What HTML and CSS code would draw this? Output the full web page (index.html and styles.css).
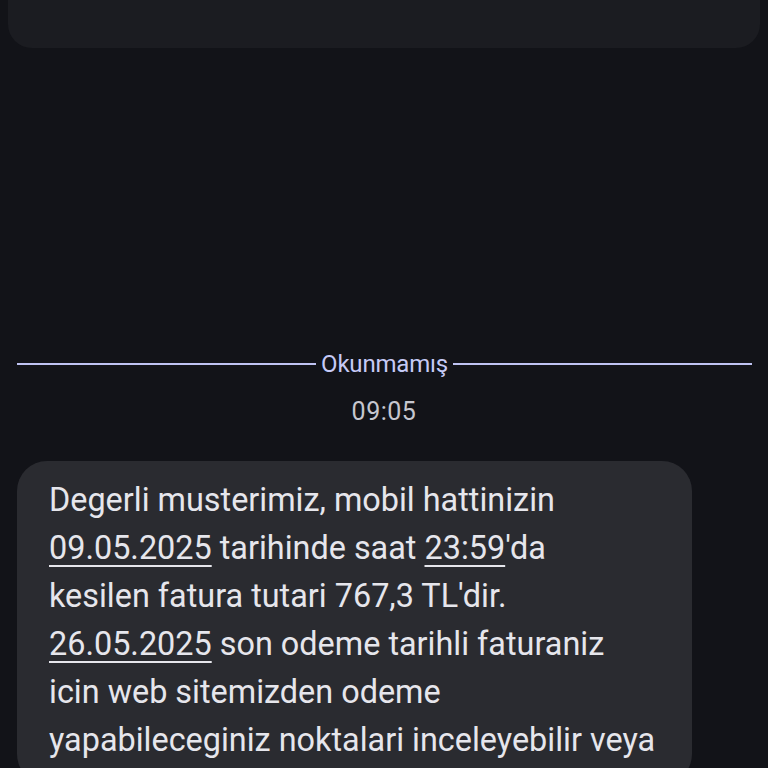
FILE: index.html
```html
<!DOCTYPE html>
<html>
<head>
<meta charset="utf-8">
<link rel="stylesheet" href="styles.css">
</head>
<body>
<div class="screen">
  <div class="top-card">
    <div class="top-text"><span class="tp">p</span><span class="ts">ş</span></div>
  </div>
  <div class="divider">
    <span class="line"></span>
    <span class="label">Okunmamış</span>
    <span class="line"></span>
  </div>
  <div class="time">09:05</div>
  <div class="bubble">
    <p class="msg">Degerli musterimiz, mobil hattinizin<br><u>09.05.2025</u> tarihinde saat <u>23:59</u>'da<br>kesilen fatura tutari 767,3 TL'dir.<br><u>26.05.2025</u> son odeme tarihli faturaniz<br>icin web sitemizden odeme<br>yapabileceginiz noktalari inceleyebilir veya</p>
  </div>
</div>
</body>
</html>
```
FILE: styles.css
```css
html, body {
  margin: 0;
  padding: 0;
  background: #121318;
  width: 768px;
  height: 768px;
  overflow: hidden;
  font-family: Roboto, "Noto Sans", sans-serif;
}
.screen {
  display: flex;
  flex-direction: column;
  align-items: stretch;
}
.top-card {
  margin: -40px 8px 0 8px;
  height: 88px;
  background: #1b1c21;
  border-radius: 0 0 24px 24px;
}
.top-text {
  display: flex;
  height: 40px;
  align-items: flex-end;
  font-size: 20px;
  line-height: 20px;
  margin-top: -12px;
  padding-left: 280px;
  gap: 136px;
}
.tp { color: #e3e3e8; }
.ts { color: #c2c6f5; }
.divider {
  margin-top: 303px;
  padding: 0 16px 0 17px;
  display: flex;
  align-items: center;
  gap: 5px;
  height: 26px;
}
.line {
  flex: 1;
  height: 2px;
  background: #bfc3f2;
}
.label {
  color: #c6caf6;
  font-size: 24px;
  line-height: 26px;
  letter-spacing: -0.2px;
}
.time {
  margin-top: 22px;
  text-align: center;
  color: #c6c7cf;
  font-size: 25px;
  line-height: 26px;
  letter-spacing: 0.5px;
}
.bubble {
  margin: 36px 0 0 17px;
  width: 675px;
  background: #2a2b30;
  border-radius: 30px;
  padding: 15px 20px 20px 32px;
  box-sizing: border-box;
}
.msg {
  margin: 0;
  color: #e6e6ec;
  font-size: 32.4px;
  line-height: 48px;
  white-space: nowrap;
}
.msg u {
  text-decoration-thickness: 2px;
  text-underline-offset: 6px;
}
```
